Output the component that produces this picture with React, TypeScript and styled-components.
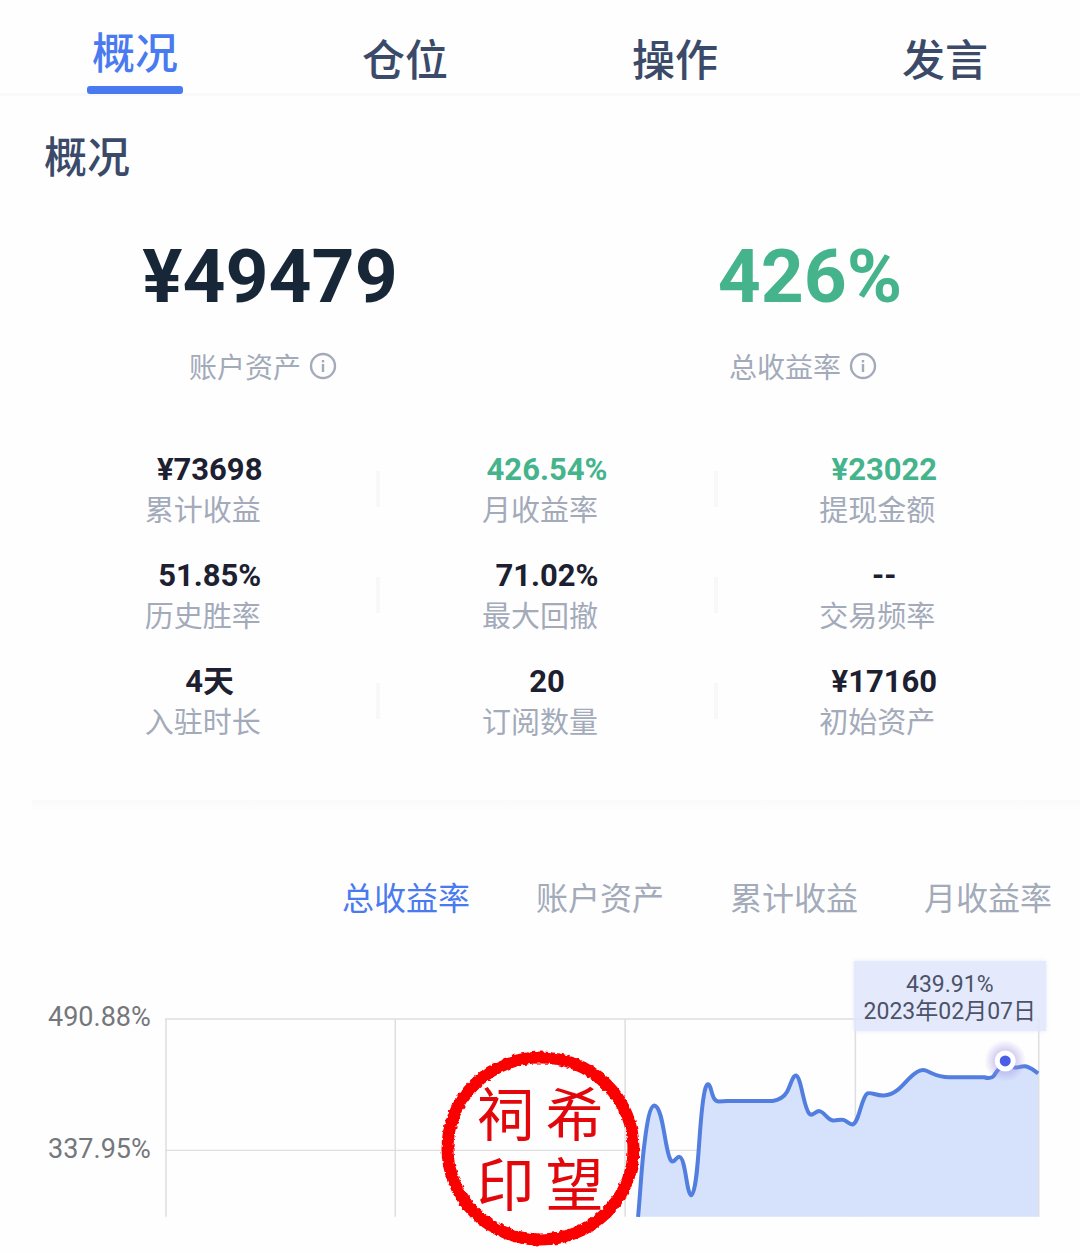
import React, { useState } from "react";
import styled, { createGlobalStyle } from "styled-components";

const cjk = `"Noto Sans CJK SC", sans-serif`;

const GlobalStyle = createGlobalStyle`
  *, *::before, *::after { box-sizing: border-box; }
  body {
    margin: 0;
    background: #fefefe;
    font-family: Roboto, ${cjk};
  }
  button {
    font-family: inherit;
    border: 0;
    background: none;
    padding: 0;
    cursor: pointer;
  }
`;

const colors = {
  blue: "#4a7af0",
  navy: "#3a4a68",
  ink: "#182738",
  value: "#1c2030",
  green: "#45b48c",
  label: "#a3aaba",
  grid: "#dedede",
};

const Page = styled.main`
  width: 100%;
`;

const TopTabs = styled.nav`
  display: grid;
  grid-template-columns: repeat(4, 1fr);
  height: 96px;
  border-bottom: 3px solid #f9f9f9;
`;

const TopTab = styled.button<{ $active: boolean }>`
  display: flex;
  flex-direction: column;
  align-items: center;
  gap: 6px;
  height: 94px;
  padding-top: ${(p) => (p.$active ? 20 : 27)}px;
  color: ${(p) => (p.$active ? colors.blue : colors.navy)};
  font-family: ${cjk};
  font-size: 43px;
  font-weight: 500;
  line-height: 60px;

  &::after {
    content: "";
    display: ${(p) => (p.$active ? "block" : "none")};
    width: 96px;
    height: 8px;
    border-radius: 3px;
    background: ${colors.blue};
  }
`;

const Overview = styled.section`
  padding-top: 28px;
`;

const Heading = styled.h2`
  margin: 0;
  padding-left: 44px;
  color: ${colors.navy};
  font-family: ${cjk};
  font-size: 43px;
  font-weight: 500;
  line-height: 60px;
`;

const Headline = styled.div`
  display: grid;
  grid-template-columns: 1fr 1fr;
  padding-top: 48px;
`;

const HeadlineItem = styled.div`
  display: flex;
  flex-direction: column;
  align-items: center;
  gap: 26px;
`;

const BigNumber = styled.strong<{ $green?: boolean }>`
  color: ${(p) => (p.$green ? colors.green : colors.ink)};
  font-size: 75px;
  font-weight: 700;
  line-height: 88px;
`;

const Caption = styled.span`
  display: flex;
  align-items: center;
  gap: 8px;
  padding-right: 14px;
  color: ${colors.label};
  font-family: ${cjk};
  font-size: 28px;
  line-height: 40px;
`;

const InfoButton = styled.button`
  display: flex;
  color: ${colors.label};
`;

const Stats = styled.div`
  display: grid;
  grid-template-columns: repeat(3, 1fr);
  row-gap: 30px;
  padding: 65px 27px 61px 41px;
`;

const Stat = styled.div`
  display: flex;
  align-items: center;

  &:not(:nth-child(3n))::after {
    content: "";
    width: 4px;
    height: 36px;
    margin: 0 -2px;
    background: #f8f8f8;
  }
`;

const StatText = styled.div`
  display: flex;
  flex: 1;
  flex-direction: column;
  align-items: center;
  line-height: 38px;
`;

const StatValue = styled.strong<{ $green?: boolean }>`
  color: ${(p) => (p.$green ? colors.green : colors.value)};
  font-size: 31px;
  font-weight: 700;
`;

const StatLabel = styled.span`
  padding-right: 14px;
  color: ${colors.label};
  font-family: ${cjk};
  font-size: 29px;
`;

const Separator = styled.hr`
  height: 12px;
  margin: 0 0 0 32px;
  border: 0;
  background: linear-gradient(#fafafa, #fefefe);
`;

const ChartSection = styled.section`
  position: relative;
  padding: 60px 40px 37px 48px;
`;

const ChartTabs = styled.div`
  display: flex;
  justify-content: flex-end;
  gap: 66px;
  margin-right: -12px;
`;

const ChartTab = styled.button<{ $active: boolean }>`
  color: ${(p) => (p.$active ? colors.blue : colors.label)};
  font-family: ${cjk};
  font-size: 32px;
  line-height: 48px;
`;

const ChartRow = styled.div`
  display: flex;
  gap: 14px;
  padding-top: 81px;
`;

const Axis = styled.div`
  display: flex;
  flex-direction: column;
  gap: 100px;
  color: #74777c;
  font-size: 27px;
  line-height: 32px;
`;

const Plot = styled.div`
  position: relative;
  flex: 1;
  margin-top: 17px;
`;

const PlotSvg = styled.svg`
  display: block;
  width: 100%;
  height: auto;
`;

const Tooltip = styled.div`
  position: absolute;
  top: -57px;
  right: -6px;
  padding: 10px 10px 6px;
  background: rgba(224, 231, 252, 0.88);
  box-shadow: 0 0 4px rgba(224, 231, 252, 0.9);
  color: #4c5268;
  font-size: 23px;
  line-height: 27px;
  text-align: center;
  white-space: nowrap;
`;

const Seal = styled.div`
  position: absolute;
  bottom: 6px;
  left: 50%;
  display: grid;
  place-items: center;
  width: 200px;
  height: 200px;
  margin-left: -100px;
  color: #e2070b;
`;

const SealRing = styled.svg`
  grid-area: 1 / 1;
  width: 200px;
  height: 200px;
`;

const SealText = styled.div`
  grid-area: 1 / 1;
  display: grid;
  grid-template-columns: 69px 69px;
  justify-items: center;
  padding-top: 6px;
  font-size: 58px;
  line-height: 70px;
`;

const InfoIcon = () => (
  <svg width="28" height="28" viewBox="0 0 28 28" fill="none" aria-hidden="true">
    <circle cx="14" cy="14" r="12" stroke="currentColor" strokeWidth="2.400" />
    <path d="M14 12V20" stroke="currentColor" strokeWidth="2.400" />
    <rect x="12.800" y="8" width="2.400" height="2.400" fill="currentColor" />
  </svg>
);

const LINE =
  "M638.5 1217 C641 1190 642 1165 645 1143 C647.500 1122 650.500 1106 654.700 1105.500 C664 1107 665 1150 671 1160 C674 1165 676 1157 680 1157 C686 1158 687 1194 691.700 1195.500 C700 1190 699 1110 706 1088 C707.500 1083 709.500 1083 711 1088 C713 1095 714 1101 719 1101.500 L728 1101 L773 1101 C779 1100 784 1098 787.500 1092 C791 1086 793 1075.500 796.500 1075.500 C802 1077 804 1108 810 1114 C813 1117 816 1111 820 1111.200 C825 1112 828 1120 833.500 1120.500 C838 1121 840 1119 844 1120 C848 1121 850 1125 853.500 1124.500 C860 1122 862 1097 868 1093.500 C872 1092 876 1095.500 884 1095.500 C899 1096 907 1078 917 1072.500 C920 1070.500 923 1069.500 926 1070.500 C933 1073 938 1077.300 950 1077.300 L985 1077.300 C989 1078.500 992 1079 994.500 1076 C998 1071 1000 1066 1006 1066 C1010 1066 1011 1067.500 1017 1067.500 C1020 1067.500 1022 1066 1026 1066.300 C1031 1067 1034 1070 1039 1073.500";

const topTabs = ["概况", "仓位", "操作", "发言"];
const chartTabs = ["总收益率", "账户资产", "累计收益", "月收益率"];

const stats = [
  { value: "¥73698", label: "累计收益" },
  { value: "426.54%", label: "月收益率", green: true },
  { value: "¥23022", label: "提现金额", green: true },
  { value: "51.85%", label: "历史胜率" },
  { value: "71.02%", label: "最大回撤" },
  { value: "--", label: "交易频率" },
  { value: "4天", label: "入驻时长" },
  { value: "20", label: "订阅数量" },
  { value: "¥17160", label: "初始资产" },
];

const ReturnChart = () => (
  <PlotSvg viewBox="165 1018 876 199" role="img" aria-label="总收益率">
    <defs>
      <radialGradient id="halo">
        <stop offset="0.4" stopColor="#9d8fe0" stopOpacity="0.5" />
        <stop offset="1" stopColor="#9d8fe0" stopOpacity="0" />
      </radialGradient>
    </defs>
    <g stroke={colors.grid} strokeWidth="1.5">
      <path d="M165 1019H1040M165 1150.500H1040" />
      <path d="M166 1019V1217M395.500 1019V1217M625.500 1019V1217M856 1019V1217M1039.500 1019V1217" />
    </g>
    <path d={`${LINE} V1217 H638.5 Z`} fill="#d6e2fb" />
    <path d={LINE} fill="none" stroke="#527ee0" strokeWidth="4" strokeLinejoin="round" />
    <circle cx="1006" cy="1061" r="21" fill="url(#halo)" />
    <circle cx="1006" cy="1061" r="10.500" fill="#ffffff" />
    <circle cx="1006" cy="1061" r="5.500" fill="#4a5fe6" />
  </PlotSvg>
);

export default function App() {
  const [tab, setTab] = useState(topTabs[0]);
  const [series, setSeries] = useState(chartTabs[0]);

  return (
    <Page>
      <GlobalStyle />
      <TopTabs>
        {topTabs.map((name) => (
          <TopTab key={name} type="button" $active={name === tab} onClick={() => setTab(name)}>
            {name}
          </TopTab>
        ))}
      </TopTabs>

      <Overview>
        <Heading>概况</Heading>
        <Headline>
          <HeadlineItem>
            <BigNumber>¥49479</BigNumber>
            <Caption>
              账户资产
              <InfoButton type="button" aria-label="账户资产说明">
                <InfoIcon />
              </InfoButton>
            </Caption>
          </HeadlineItem>
          <HeadlineItem>
            <BigNumber $green>426%</BigNumber>
            <Caption>
              总收益率
              <InfoButton type="button" aria-label="总收益率说明">
                <InfoIcon />
              </InfoButton>
            </Caption>
          </HeadlineItem>
        </Headline>
        <Stats>
          {stats.map((s) => (
            <Stat key={s.label}>
              <StatText>
                <StatValue $green={s.green}>{s.value}</StatValue>
                <StatLabel>{s.label}</StatLabel>
              </StatText>
            </Stat>
          ))}
        </Stats>
      </Overview>

      <Separator />

      <ChartSection>
        <ChartTabs>
          {chartTabs.map((name) => (
            <ChartTab key={name} type="button" $active={name === series} onClick={() => setSeries(name)}>
              {name}
            </ChartTab>
          ))}
        </ChartTabs>
        <ChartRow>
          <Axis>
            <span>490.88%</span>
            <span>337.95%</span>
          </Axis>
          <Plot>
            <ReturnChart />
            <Tooltip>
              <div>439.91%</div>
              <div>2023年02月07日</div>
            </Tooltip>
          </Plot>
        </ChartRow>
        <Seal>
          <SealRing viewBox="0 0 200 200" aria-hidden="true">
            <filter id="rough" x="-5%" y="-5%" width="110%" height="110%">
              <feTurbulence type="fractalNoise" baseFrequency="0.25" numOctaves="2" seed="4" />
              <feDisplacementMap in="SourceGraphic" scale="4" xChannelSelector="R" yChannelSelector="G" />
            </filter>
            <ellipse
              cx="100.500"
              cy="100.500"
              rx="93"
              ry="91"
              fill="none"
              stroke="#fb0000"
              strokeWidth="12"
              filter="url(#rough)"
            />
          </SealRing>
          <SealText>
            <span>祠</span>
            <span>希</span>
            <span>印</span>
            <span>望</span>
          </SealText>
        </Seal>
      </ChartSection>
    </Page>
  );
}
